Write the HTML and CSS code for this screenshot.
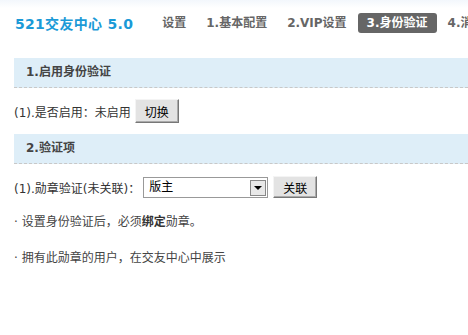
FILE: index.html
```html
<!DOCTYPE html>
<html lang="zh-CN">
<head>
    <meta charset="UTF-8">
    <title>521交友中心 5.0</title>
    <link rel="stylesheet" href="styles.css">
</head>
<body>
    <div class="header">
        <h1 class="logo">521交友中心 5.0</h1>
        <ul class="nav">
            <li><a href="#">设置</a></li>
            <li><a href="#">1.基本配置</a></li>
            <li><a href="#">2.VIP设置</a></li>
            <li class="active"><a href="#">3.身份验证</a></li>
            <li><a href="#">4.消息设置</a></li>
        </ul>
    </div>
    <div class="content">
        <h2 class="section-title">1.启用身份验证</h2>
        <div class="row">
            <span>(1).是否启用：未启用</span>
            <button class="btn">切换</button>
        </div>
        <h2 class="section-title">2.验证项</h2>
        <div class="row">
            <span>(1).勋章验证(未关联)：</span>
            <div class="select-box">
                <select>
                    <option>版主</option>
                </select>
                <span class="arrow"></span>
            </div>
            <button class="btn btn-small">关联</button>
        </div>
        <div class="tips">
            <p>· 设置身份验证后，必须<b>绑定</b>勋章。</p>
            <p>· 拥有此勋章的用户，在交友中心中展示</p>
        </div>
    </div>
</body>
</html>
```

FILE: styles.css
```css
body {
    margin: 0;
    font-family: "DejaVu Sans", "Noto Sans CJK SC", sans-serif;
    font-size: 12px;
    color: #333;
    background: #fff;
}
.header {
    display: flex;
    align-items: center;
    height: 45px;
    padding-left: 15px;
    background: linear-gradient(#f3f7fc, #fff 8px);
    white-space: nowrap;
    overflow: hidden;
}
.logo {
    margin: 0;
    font-size: 14px;
    font-weight: bold;
    color: #1a9ad7;
    letter-spacing: 0.3px;
}
.nav {
    display: flex;
    list-style: none;
    margin: 0 0 0 20px;
    padding: 0;
}
.nav li {
    margin-right: 2px;
}
.nav a {
    display: block;
    height: 20px;
    line-height: 20px;
    padding: 0 9px;
    font-weight: bold;
    color: #666;
    text-decoration: none;
    border-radius: 3px;
}
.nav .active a {
    background: #666;
    color: #fff;
}
.content {
    padding: 13px 0 0 14px;
}
.section-title {
    margin: 0;
    height: 29px;
    line-height: 29px;
    padding-left: 12px;
    font-size: 12px;
    font-weight: bold;
    color: #444;
    background: #deeef8;
    border-bottom: 1px dashed #c8c8c8;
}
.row {
    display: flex;
    align-items: center;
    height: 46px;
}
.btn {
    margin-left: 4px;
    height: 24px;
    padding: 0 9px;
    font-family: inherit;
    font-size: 12px;
    color: #000;
    background: #e3e3e3;
    border: 1px solid;
    border-color: #f4f4f4 #777 #777 #f4f4f4;
    box-shadow: inset -1px -1px 0 #aaa;
}
.btn-small {
    height: 22px;
    margin-left: 5px;
}
.select-box {
    position: relative;
    width: 125px;
    height: 21px;
    margin-left: 3px;
}
.select-box select {
    appearance: none;
    width: 100%;
    height: 100%;
    margin: 0;
    padding: 0 0 0 5px;
    font-family: inherit;
    font-size: 12px;
    color: #000;
    background: #fff;
    border: 1px solid #999;
    border-radius: 0;
}
.select-box .arrow {
    position: absolute;
    right: 2px;
    top: 3px;
    width: 14px;
    height: 14px;
    background: #e8e8e8;
    border: 1px solid #888;
    pointer-events: none;
}
.select-box .arrow::after {
    content: "";
    position: absolute;
    left: 3px;
    top: 5px;
    border-left: 4px solid transparent;
    border-right: 4px solid transparent;
    border-top: 4px solid #000;
}
.tips p {
    margin: 0 0 12px;
    line-height: 24px;
    color: #444;
}
.tips b {
    color: #333;
}
```
